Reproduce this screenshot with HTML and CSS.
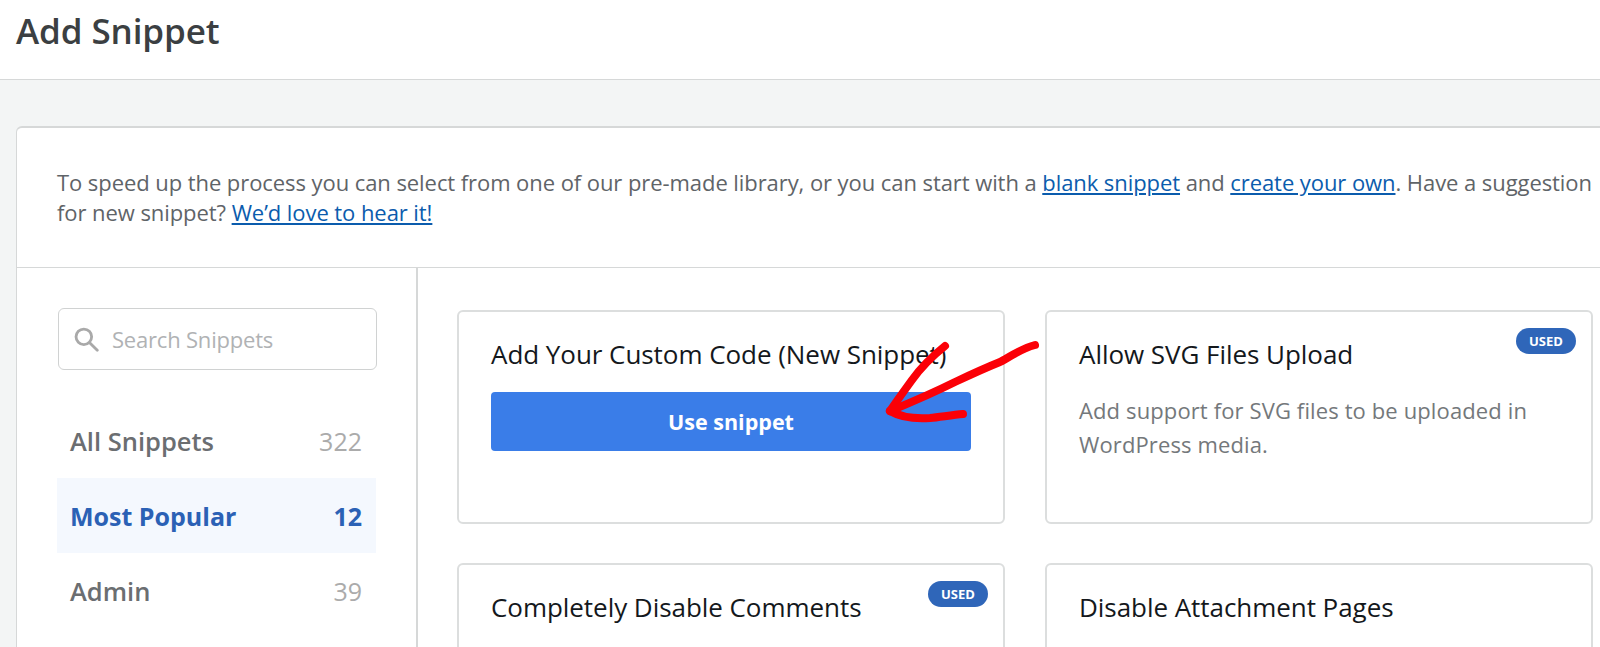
FILE: index.html
```html
<!DOCTYPE html>
<html lang="en">
<head>
<meta charset="utf-8">
<title>Add Snippet</title>
<link rel="stylesheet" href="styles.css">
</head>
<body>
<header class="topbar"><h1 class="title">Add Snippet</h1></header>
<main class="page">
  <section class="panel">
    <p class="intro">To speed up the process you can select from one of our pre-made library, or you can start with a <a href="#">blank snippet</a> and <a href="#">create your own</a>. Have a suggestion<br>for new snippet? <a href="#">We’d love to hear it!</a></p>
    <div class="body">
      <aside class="side">
        <div class="search">
          <svg class="search-icon" viewBox="0 0 24 24" width="26" height="26" fill="none" stroke="#a9a9a9" stroke-width="2.6" stroke-linecap="round"><circle cx="10" cy="10" r="7.2"/><path d="M15.4 15.4 22.4 22.4"/></svg>
          <span class="placeholder">Search Snippets</span>
        </div>
        <ul class="cats">
          <li class="cat"><span>All Snippets</span><span class="count">322</span></li>
          <li class="cat active"><span>Most Popular</span><span class="count">12</span></li>
          <li class="cat"><span>Admin</span><span class="count">39</span></li>
        </ul>
      </aside>
      <div class="grid">
        <article class="card">
          <h3 class="card-title">Add Your Custom Code (New Snippet)</h3>
          <button class="use">Use snippet</button>
        </article>
        <article class="card">
          <span class="used">USED</span>
          <h3 class="card-title">Allow SVG Files Upload</h3>
          <p class="desc">Add support for SVG files to be uploaded in WordPress media.</p>
        </article>
        <article class="card">
          <span class="used">USED</span>
          <h3 class="card-title">Completely Disable Comments</h3>
        </article>
        <article class="card">
          <h3 class="card-title">Disable Attachment Pages</h3>
        </article>
      </div>
    </div>
  </section>
</main>
<svg class="arrow" viewBox="0 0 1600 647" width="1600" height="647" fill="none" stroke="#fb0007" stroke-width="8" stroke-linecap="round" stroke-linejoin="round">
  <path d="M945 346C930 358 922 366 912 380C904 391 896 402 890 411"/>
  <path d="M1035 345C1020 349 1008 358 1000 362C985 368 972 374 955 382C935 392 912 402 890 411"/>
  <path d="M890 411C902 418 915 419 930 418C940 417 952 415 963 414"/>
</svg>
</body>
</html>
```
FILE: styles.css
```css
* { box-sizing: border-box; }
html, body { margin: 0; height: 647px; overflow: hidden; }
body { background: #f3f5f5; font-family: "Open Sans", "Noto Sans", sans-serif; color: #50575e; width: 1600px; position: relative; }
.topbar { height: 80px; background: #fff; border-bottom: 1px solid #d6d8d8; padding: 8px 16px 0; }
.title { margin: 0; font-size: 35px; line-height: 46px; font-weight: 550; color: #3b3f42; letter-spacing: -0.1px; }
.page { padding: 46px 0 0 16px; }
.panel { width: 1584px; height: 521px; background: #fff; border: 1px solid #d6d8d8; border-width: 2px 0 0 1px; border-radius: 6px 0 0 0; overflow: hidden; }
.intro { margin: 0; padding: 39px 0 0 40px; height: 140px; border-bottom: 1px solid #d6d8d8; font-size: 22px; line-height: 30px; color: #5f6468; letter-spacing: -0.07px; white-space: nowrap; }
.intro a { color: #0b5cad; }
.body { display: flex; }
.side { width: 401px; height: 420px; border-right: 2px solid #d6d8d8; padding: 40px 0 0 41px; }
.search { width: 319px; height: 62px; border: 1px solid #d0d2d2; border-radius: 6px; display: flex; align-items: center; padding-left: 14px; gap: 13px; }
.search-icon { flex: none; }
.placeholder { font-size: 22px; color: #b0b2b4; letter-spacing: -0.2px; }
.cats { list-style: none; margin: 33px 0 0 -1px; padding: 0; width: 319px; }
.cat { height: 75px; display: flex; justify-content: space-between; align-items: center; padding: 0 14px 0 13px; font-size: 25.5px; font-weight: 550; color: #6b6e71; }
.cat .count { color: #ababab; font-size: 25px; font-weight: 400; }
.cat.active { background: #f4f8fe; color: #2b61b5; font-size: 25px; font-weight: 700; }
.cat.active .count { color: #2b61b5; font-weight: 700; }
.grid { display: grid; grid-template-columns: 548px 548px; gap: 39px 40px; padding: 42px 0 0 39px; align-content: start; }
.card { position: relative; height: 214px; border: 2px solid #dcdede; border-radius: 6px; padding: 24px 32px; }
.card-title { margin: 0; font-size: 26px; line-height: 36px; font-weight: 500; color: #14181c; letter-spacing: -0.05px; white-space: nowrap; }
.use { display: block; margin-top: 20px; width: 480px; height: 59px; border: 0; border-radius: 4px; background: #3a7de8; color: #fff; font: 700 21.5px "Open Sans", sans-serif; }
.desc { margin: 21px 0 0; font-size: 22px; line-height: 34px; color: #74787b; letter-spacing: 0.12px; }
.used { position: absolute; top: 16px; right: 15px; width: 60px; height: 26px; border-radius: 13px; background: #2f66b9; color: #fff; font-size: 13px; font-weight: 700; display: flex; align-items: center; justify-content: center; }
.arrow { position: absolute; left: 0; top: 0; pointer-events: none; }
```
